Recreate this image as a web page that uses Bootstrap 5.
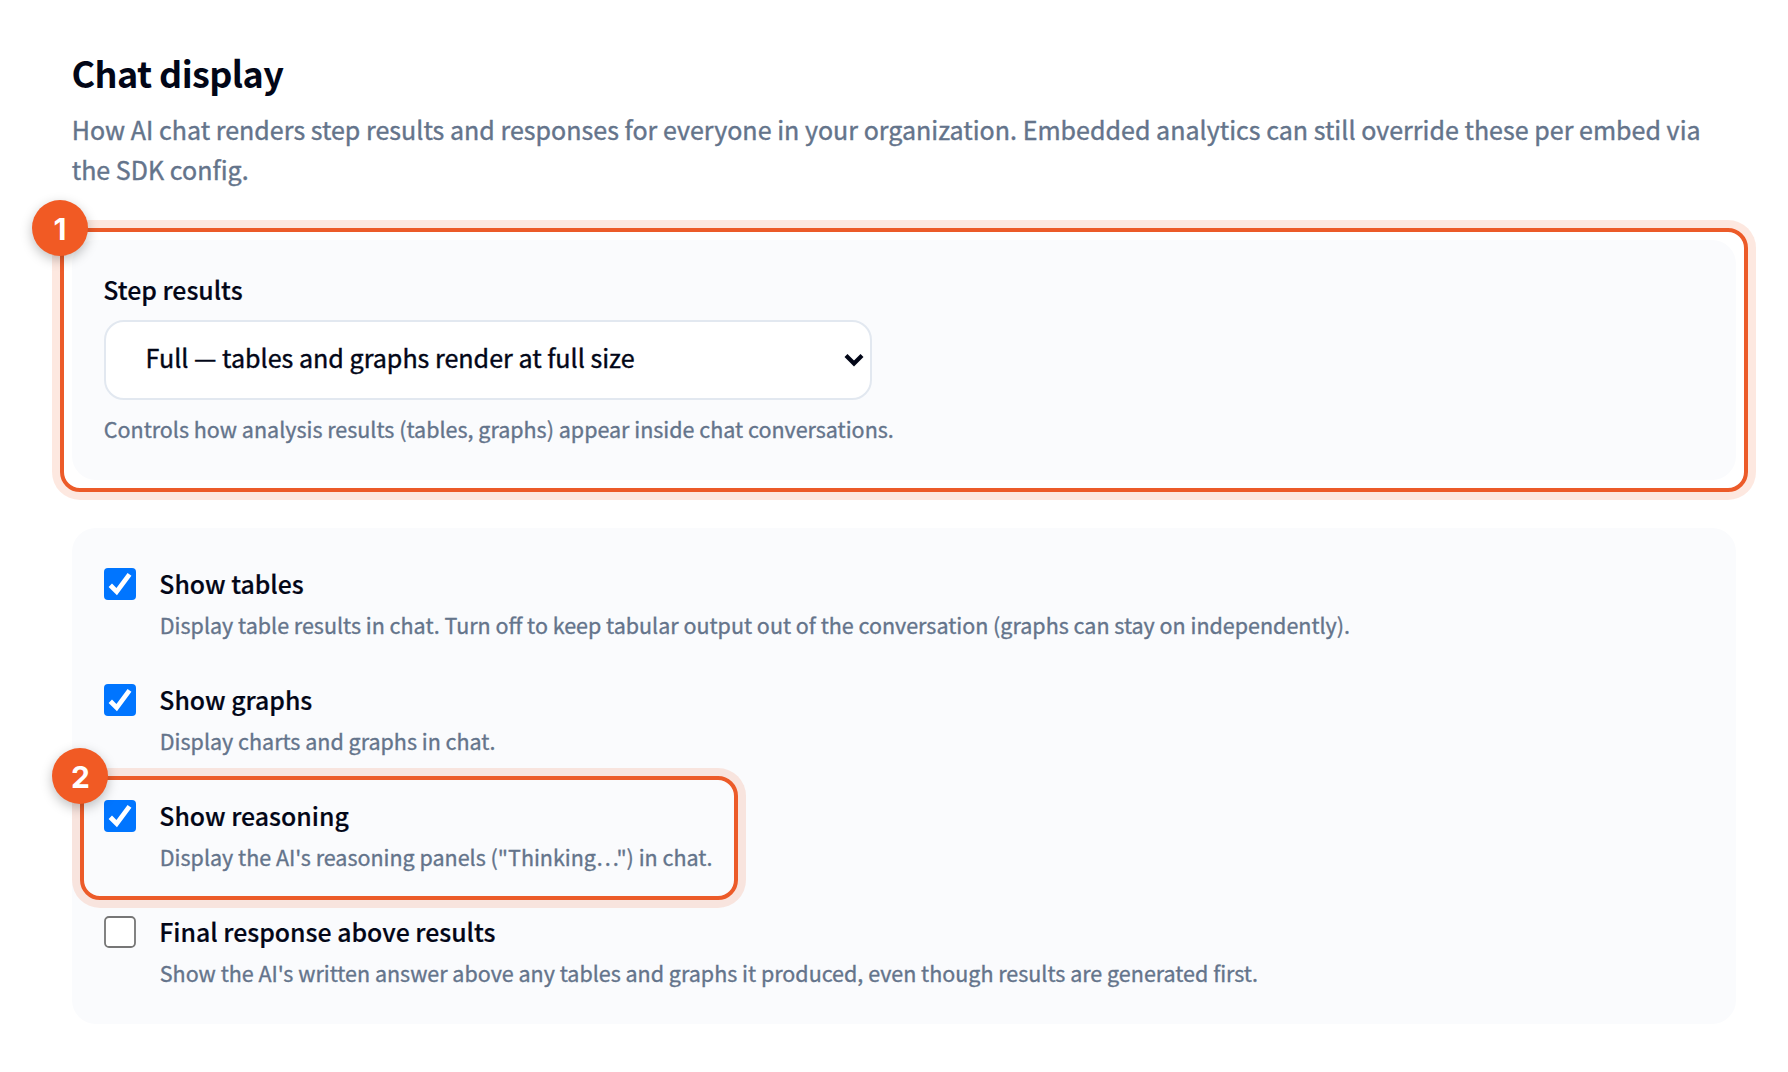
<!DOCTYPE html>
<html lang="en">
<head>
<meta charset="utf-8">
<title>Chat display</title>
<link rel="stylesheet" href="https://cdn.jsdelivr.net/npm/bootstrap@5.3.0/dist/css/bootstrap.min.css">
<style>
body{font-family:"Noto Sans CJK SC","Noto Sans",sans-serif;color:#020617;background:#fff;height:1072px;overflow:hidden}
.page-wrap{padding:48px 52px 0 72px}
.page-title{font-size:36px;line-height:48px;font-weight:600;margin:0 0 13px -.5px;letter-spacing:-.6px}
.page-desc{font-size:25px;line-height:40px;color:#64748b;margin:0 0 51px -.3px;white-space:nowrap;letter-spacing:.029px;-webkit-text-stroke:.4px}
.panel{width:1664px;background:#fafbfd;border-radius:24px}
.panel-a{height:240px;padding:29px 32px 0;margin-bottom:48px}
.panel-b{height:496px;padding:39px 32px 0;gap:42px}
.lbl{font-size:24.85px;font-weight:500;line-height:32px;white-space:nowrap;margin-left:-.7px;-webkit-text-stroke:.2px}
.panel-a .lbl{line-height:40px;margin-bottom:11px}
.hint{font-size:21.49px;line-height:32px;color:#64748b;white-space:nowrap;margin-left:-.2px;-webkit-text-stroke:.35px}
.option-text .hint{margin-top:10px}
.pick{width:768px;height:80px;border:2px solid #e2e8f0;border-radius:20px;background:#fff;font-size:25.08px;padding:0 6px 0 39.6px;margin-bottom:13px;-webkit-text-stroke:.4px}
.pick span{padding-bottom:5px}
.tick{width:32px;height:32px;margin-top:1px;margin-right:24px}
.frame{border:4px solid #ec5b29;border-radius:20px;box-shadow:0 0 0 8px rgba(242,91,36,.14)}
.frame-1{left:-12px;top:-12px;width:1688px;height:264px}
.frame-2{left:-24px;top:-23px;width:658px;height:124px}
.pin{width:56px;height:56px;border-radius:50%;background:#f15a24;color:#fff;font:700 30px/58px Inter,sans-serif;text-align:center;box-shadow:0 4px 12px rgba(0,0,0,.25);left:-32px;top:-32px}
.frame-2 .pin{text-indent:1px}
</style>
</head>
<body>
<main class="page-wrap">
<h1 class="page-title">Chat display</h1>
<p class="page-desc">How AI chat renders step results and responses for everyone in your organization. Embedded analytics can still override these per embed via<br>the SDK config.</p>
<section class="panel panel-a position-relative">
<div class="lbl">Step results</div>
<div class="pick d-flex align-items-center justify-content-between"><span>Full — tables and graphs render at full size</span>
<svg width="20" height="14" viewBox="0 0 20 14"><path d="M2 2.5 10 10.5 18 2.5" fill="none" stroke="#020617" stroke-width="4.2"/></svg></div>
<div class="hint">Controls how analysis results (tables, graphs) appear inside chat conversations.</div>
<div class="frame frame-1 position-absolute"><div class="pin position-absolute">1</div></div>
</section>
<section class="panel panel-b d-flex flex-column">
<div class="d-flex"><svg class="tick flex-shrink-0" viewBox="0 0 32 32"><rect width="32" height="32" rx="4" fill="#0075ff"/><path d="M6.3 17.2 12.7 23.6 25.5 6.4" fill="none" stroke="#fff" stroke-width="4.8"/></svg>
<div class="option-text"><div class="lbl">Show tables</div><div class="hint">Display table results in chat. Turn off to keep tabular output out of the conversation (graphs can stay on independently).</div></div></div>
<div class="d-flex"><svg class="tick flex-shrink-0" viewBox="0 0 32 32"><rect width="32" height="32" rx="4" fill="#0075ff"/><path d="M6.3 17.2 12.7 23.6 25.5 6.4" fill="none" stroke="#fff" stroke-width="4.8"/></svg>
<div class="option-text"><div class="lbl">Show graphs</div><div class="hint">Display charts and graphs in chat.</div></div></div>
<div class="d-flex position-relative"><svg class="tick flex-shrink-0" viewBox="0 0 32 32"><rect width="32" height="32" rx="4" fill="#0075ff"/><path d="M6.3 17.2 12.7 23.6 25.5 6.4" fill="none" stroke="#fff" stroke-width="4.8"/></svg>
<div class="option-text"><div class="lbl">Show reasoning</div><div class="hint">Display the AI's reasoning panels ("Thinking…") in chat.</div></div>
<div class="frame frame-2 position-absolute"><div class="pin position-absolute">2</div></div></div>
<div class="d-flex"><svg class="tick flex-shrink-0" viewBox="0 0 32 32"><rect x="1" y="1" width="30" height="30" rx="4" fill="#fff" stroke="#767676" stroke-width="1.8"/></svg>
<div class="option-text"><div class="lbl">Final response above results</div><div class="hint">Show the AI's written answer above any tables and graphs it produced, even though results are generated first.</div></div></div>
</section>
</main>
<script src="https://cdn.jsdelivr.net/npm/bootstrap@5.3.0/dist/js/bootstrap.bundle.min.js"></script>
</body>
</html>
